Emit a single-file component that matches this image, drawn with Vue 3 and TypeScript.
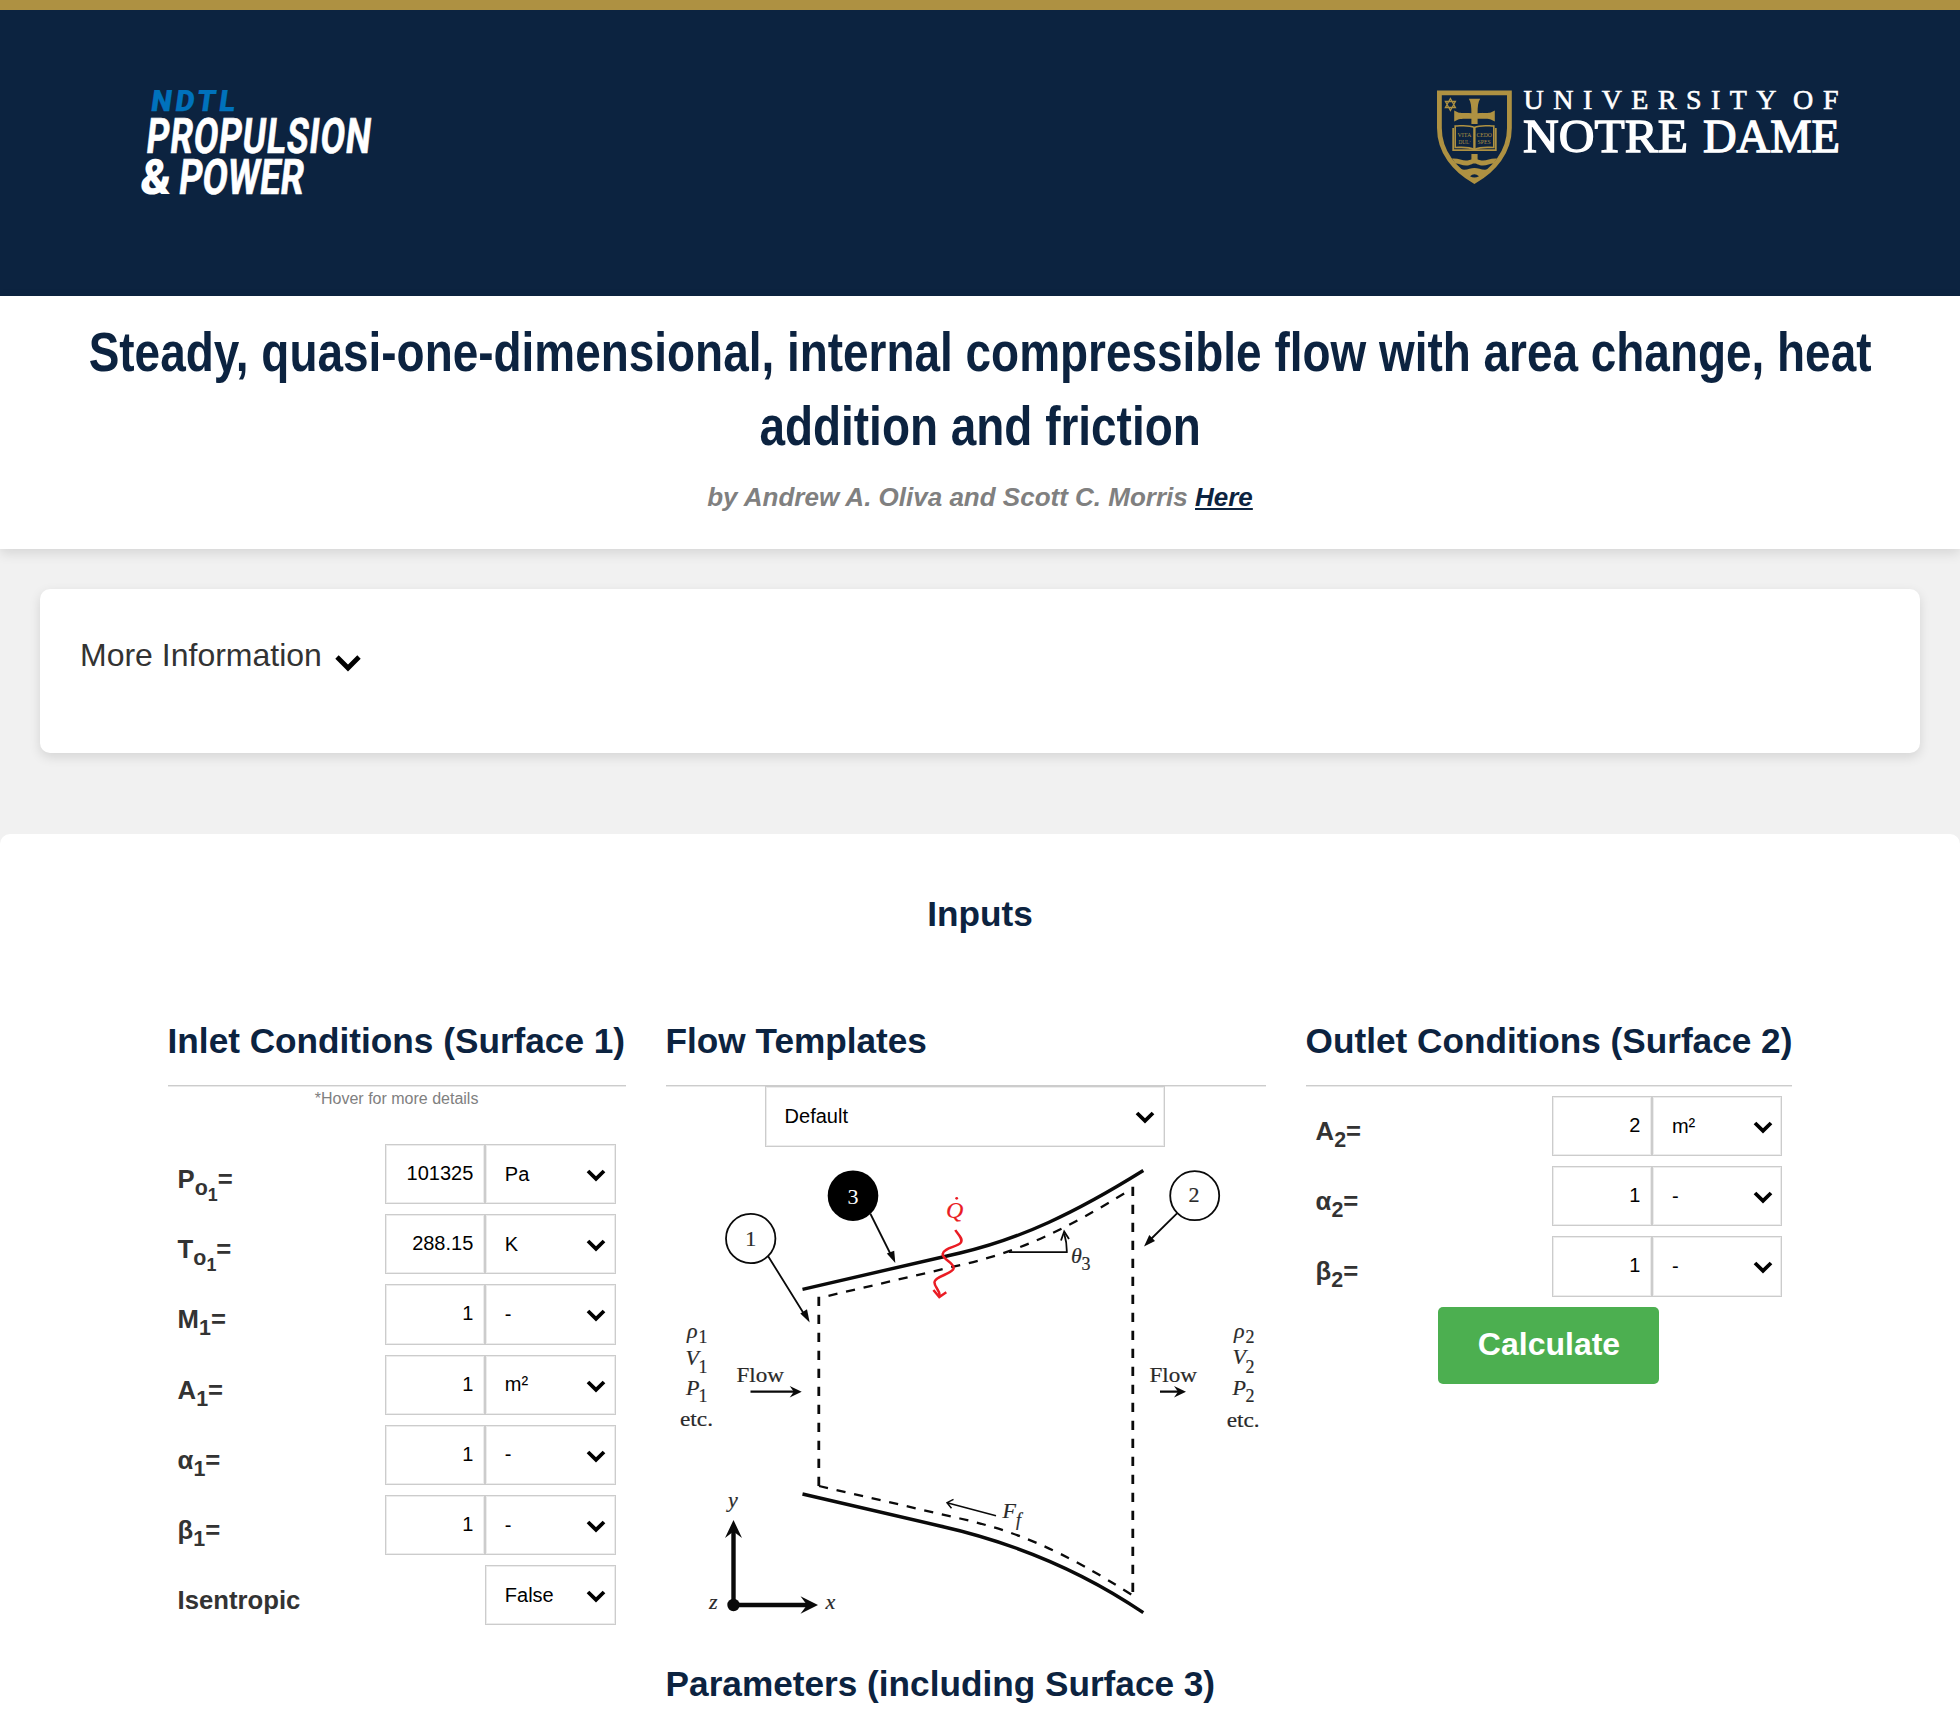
<script setup lang="ts">
import { reactive } from 'vue'

interface Field {
  sym: string
  sub: string
  subsub?: string
  value: string
  unit: string
}

const inlet = reactive<Field[]>([
  { sym: 'P', sub: 'o', subsub: '1', value: '101325', unit: 'Pa' },
  { sym: 'T', sub: 'o', subsub: '1', value: '288.15', unit: 'K' },
  { sym: 'M', sub: '1', value: '1', unit: '-' },
  { sym: 'A', sub: '1', value: '1', unit: 'm²' },
  { sym: 'α', sub: '1', value: '1', unit: '-' },
  { sym: 'β', sub: '1', value: '1', unit: '-' },
])

const outlet = reactive<Field[]>([
  { sym: 'A', sub: '2', value: '2', unit: 'm²' },
  { sym: 'α', sub: '2', value: '1', unit: '-' },
  { sym: 'β', sub: '2', value: '1', unit: '-' },
])
</script>

<template>
  <div class="page">
    <header class="banner">
      <svg class="ndtl" width="240" height="120" viewBox="136 80 240 120">
        <g font-family="Roboto, sans-serif" fill="#fff">
          <text transform="translate(150 111) skewX(-8)" font-size="29.5" font-weight="900" fill="#0072bc" stroke="#0072bc" stroke-width="0.3" textLength="84" lengthAdjust="spacing">NDTL</text>
          <text transform="translate(145 152.7) skewX(-6.5)" font-size="49" font-weight="700" stroke="#fff" stroke-width="0.6" textLength="225" lengthAdjust="spacingAndGlyphs" letter-spacing="1">PROPULSION</text>
          <text transform="translate(139.5 194.3) skewX(-4)" font-size="49" font-weight="900" textLength="31" lengthAdjust="spacingAndGlyphs">&amp;</text>
          <text transform="translate(177.5 194.3) skewX(-6.5)" font-size="49" font-weight="700" stroke="#fff" stroke-width="0.6" textLength="125" lengthAdjust="spacingAndGlyphs">POWER</text>
        </g>
      </svg>
      <svg class="nd" width="410" height="100" viewBox="1434 88 410 100">
        <path d="M1439.4 92.8H1509.4V128C1509.4 152 1494 170 1474.4 181.2C1454.8 170 1439.4 152 1439.4 128Z" fill="none" stroke="#ae9142" stroke-width="4.8" />
        <g fill="#ae9142">
          <path d="M1468.8 98.8H1480.2C1478 102 1477.6 107 1477.6 113.2C1484 113.2 1489 113.2 1490.8 112.6L1494.8 110.4V121.4L1490.8 119.4C1489 118.8 1484 118.8 1477.6 118.8V124H1471.4V118.8C1465 118.8 1460 118.8 1458.2 119.4L1454.2 121.4V110.4L1458.2 112.6C1460 113.2 1465 113.2 1471.4 113.2C1471.4 107 1471 102 1468.8 98.8Z" />
          <path d="M1471.4 154H1477.6V161H1471.4Z" />
          <path d="M1452 158.5C1458 158 1462 160.5 1466 160.5C1470 160.5 1471 159 1474.4 159C1478 159 1479 160.5 1483 160.5C1487 160.5 1491 158 1497 158.5L1493.5 163.5C1490 163.5 1487 165.5 1483 165.5C1478 165.5 1477.5 163.5 1474.4 163.5C1471.5 163.5 1471 165.5 1466 165.5C1462 165.5 1459 163.5 1455.5 163.5Z" />
          <path d="M1460 169C1466 171 1470 168 1474.4 168C1479 168 1483 171 1489 169L1481 177.5L1474.4 182L1467.5 177.5Z" />
        </g>
        <path d="M1470 176.2Q1474.4 172.4 1479 176.2Q1474.4 179 1470 176.2Z" fill="#0c2340" />
        <g fill="none" stroke="#ae9142">
          <path d="M1474.4 127.5C1468 124.5 1461 126 1455.2 126V147.5C1462 147.5 1468 146.5 1474.4 149.5C1481 146.5 1487 147.5 1493.8 147.5V126C1488 126 1481 124.5 1474.4 127.5Z" stroke-width="1.6" />
          <path d="M1453.2 128V150.2H1495.8V128" stroke-width="1.8" />
          <path d="M1474.4 127V150" stroke-width="2.4" />
          <path d="M1450.4 98.5L1455.4 107.5H1445.4ZM1450.4 110.5L1445.4 101.5H1455.4Z" stroke-width="1.3" />
        </g>
        <g font-family="'Liberation Serif', serif" font-size="7" fill="#ae9142">
          <text x="1457.4" y="136.8" textLength="14" lengthAdjust="spacingAndGlyphs">VITA</text>
          <text x="1458.4" y="143.8" textLength="12.5" lengthAdjust="spacingAndGlyphs">DUL·</text>
          <text x="1476.4" y="136.8" textLength="15.5" lengthAdjust="spacingAndGlyphs">CEDO</text>
          <text x="1477.6" y="143.8" textLength="13" lengthAdjust="spacingAndGlyphs">SPES</text>
        </g>
        <g font-family="'Liberation Serif', serif" fill="#fff" stroke="#fff">
          <text x="1523.6" y="109" font-size="28" stroke-width="0.6" textLength="253">UNIVERSITY</text>
          <text x="1793" y="109" font-size="28" stroke-width="0.6" textLength="45.5">OF</text>
          <text x="1523" y="151.7" font-size="47" stroke-width="1.3" textLength="165" lengthAdjust="spacingAndGlyphs">NOTRE</text>
          <text x="1703" y="151.7" font-size="47" stroke-width="1.3" textLength="137" lengthAdjust="spacingAndGlyphs">DAME</text>
        </g>
      </svg>
    </header>

    <section class="title">
      <h1>
        <span>Steady, quasi-one-dimensional, internal compressible flow with area change, heat</span>
        <span>addition and friction</span>
      </h1>
      <p class="authors">by Andrew A. Oliva and Scott C. Morris <a href="#">Here</a></p>
    </section>

    <section class="info">
      <span>More Information</span>
      <svg width="26" height="17" viewBox="0 0 26 17"><path d="M2 2L13 13L24 2" fill="none" stroke="#000" stroke-width="4.8" /></svg>
    </section>

    <main class="inputs">
      <h2>Inputs</h2>
      <div class="columns">
        <section class="inlet">
          <h3>Inlet Conditions (Surface 1)</h3>
          <p class="hint">*Hover for more details</p>
          <div v-for="f in inlet" :key="f.sym" class="row">
            <label>{{ f.sym }}<sub>{{ f.sub }}<sub v-if="f.subsub">{{ f.subsub }}</sub></sub>=</label>
            <input v-model="f.value" type="text" />
            <div class="pick">
              <select><option>{{ f.unit }}</option></select>
              <svg width="20" height="13" viewBox="0 0 20 13"><path d="M2 2L10 9.8L18 2" /></svg>
            </div>
          </div>
          <div class="row">
            <label>Isentropic</label>
            <div class="pick">
              <select><option>False</option></select>
              <svg width="20" height="13" viewBox="0 0 20 13"><path d="M2 2L10 9.8L18 2" /></svg>
            </div>
          </div>
        </section>

        <section class="flow">
          <h3>Flow Templates</h3>
          <div class="pick template">
            <select><option>Default</option></select>
            <svg width="20" height="13" viewBox="0 0 20 13"><path d="M2 2L10 9.8L18 2" /></svg>
          </div>
          <svg class="diagram" width="600" height="500" viewBox="666 1147 600 500">
            <g fill="none" stroke="#0a0a0a">
              <path d="M802.5 1289.3L960 1253C1020 1239 1075 1213 1143.3 1170.5" stroke-width="3.4" />
              <path d="M802.5 1494L940 1526C1000 1539.5 1070 1563 1143.3 1612.7" stroke-width="3.4" />
              <g stroke-width="2.8" stroke-dasharray="9.2 8.8">
                <path d="M818.8 1296.7V1486" />
                <path d="M1132.8 1186.7V1592" />
                <path d="M828.5 1295.8L965 1264C1020 1251 1065 1230 1129 1190.5" stroke-width="2.3" />
                <path d="M819 1486L960 1518.5C1015 1531 1060 1549 1132 1595" stroke-width="2.3" />
              </g>
              <g stroke-width="1.8">
                <circle cx="750.7" cy="1238.5" r="24.7" />
                <circle cx="1194.7" cy="1195.7" r="24.5" />
                <path d="M768 1256L805 1315.5M870.5 1214L891.5 1256M1177 1213.3L1150 1240" />
                <path d="M1009 1252.2H1066.8Q1067 1243 1064.3 1234" />
                <path d="M1061 1240.5L1064.2 1231.5L1069 1239" />
                <path d="M996 1515.7L948 1503M953.5 1499.3L947 1502.7L951.5 1508.3" stroke-width="1.5" />
              </g>
              <path d="M750.5 1391.7H796M1160 1391.7H1181" stroke-width="2.2" />
              <path d="M733.5 1529V1605H808" stroke-width="4.4" />
            </g>
            <g fill="#0a0a0a">
              <circle cx="853" cy="1195.7" r="25.3" fill="#000" />
              <path d="M809.7 1322.6L800.3 1313.6L807 1309.3Z" />
              <path d="M895.3 1263L886.8 1253.6L894.2 1250.7Z" />
              <path d="M1144 1246.5L1149.3 1235L1155 1241Z" />
              <path d="M801.7 1391.7L789.7 1386L793.8 1391.7L789.7 1397.4Z" />
              <path d="M1186 1391.7L1174 1386L1178 1391.7L1174 1397.4Z" />
              <path d="M733.5 1520L725 1538L733.5 1531.5L742 1538Z" />
              <path d="M818 1605L800.5 1596.3L807 1605L800.5 1613.7Z" />
              <circle cx="733.5" cy="1605" r="6.2" />
            </g>
            <g fill="none" stroke="#ea1c24" stroke-width="2.5">
              <path d="M955.3 1230C957.5 1234 964 1239 960.5 1243C957 1247 943.5 1248 942.7 1254C942 1259 954 1263 953.7 1268C953 1274 935 1276 934.5 1282C934 1287 940.5 1290 939.6 1296.5" />
              <path d="M933.4 1290L939.3 1297L946.3 1292.3" />
            </g>
            <circle cx="956.7" cy="1198.3" r="1.4" fill="#ea1c24" />
            <g class="math">
              <text x="745.2" y="1246">1</text>
              <text x="847.5" y="1203.5" class="inv">3</text>
              <text x="1188.5" y="1202">2</text>
              <text x="946" y="1217.5" font-size="24" font-style="italic" class="heat">Q</text>
              <text x="1071" y="1262.5" font-style="italic">θ</text>
              <text x="1081.5" y="1269.5" class="s">3</text>
              <text x="736.5" y="1382" textLength="47.5" lengthAdjust="spacingAndGlyphs">Flow</text>
              <text x="1149.5" y="1382" textLength="47.5" lengthAdjust="spacingAndGlyphs">Flow</text>
              <text x="687" y="1338" font-style="italic">ρ</text>
              <text x="698.5" y="1343" class="s">1</text>
              <text x="685.5" y="1364.5" font-style="italic">V</text>
              <text x="698.5" y="1373" class="s">1</text>
              <text x="686" y="1395" font-style="italic">P</text>
              <text x="698.5" y="1402" class="s">1</text>
              <text x="680" y="1426" textLength="33" lengthAdjust="spacingAndGlyphs">etc.</text>
              <text x="1234" y="1338" font-style="italic">ρ</text>
              <text x="1245.5" y="1343.3" class="s">2</text>
              <text x="1232.5" y="1364.3" font-style="italic">V</text>
              <text x="1245.5" y="1373.3" class="s">2</text>
              <text x="1232.5" y="1395.3" font-style="italic">P</text>
              <text x="1245.5" y="1402" class="s">2</text>
              <text x="1226.7" y="1426.5" textLength="33" lengthAdjust="spacingAndGlyphs">etc.</text>
              <text x="728" y="1507" font-style="italic">y</text>
              <text x="709" y="1609.3" font-style="italic">z</text>
              <text x="825.5" y="1609.3" font-style="italic">x</text>
              <text x="1002.5" y="1518.3" font-style="italic">F</text>
              <text x="1016" y="1525.5" font-style="italic" class="s">f</text>
            </g>
          </svg>
          <h3 class="params">Parameters (including Surface 3)</h3>
        </section>

        <section class="outlet">
          <h3>Outlet Conditions (Surface 2)</h3>
          <div v-for="f in outlet" :key="f.sym" class="row">
            <label>{{ f.sym }}<sub>{{ f.sub }}</sub>=</label>
            <input v-model="f.value" type="text" />
            <div class="pick">
              <select><option>{{ f.unit }}</option></select>
              <svg width="20" height="13" viewBox="0 0 20 13"><path d="M2 2L10 9.8L18 2" /></svg>
            </div>
          </div>
          <button type="button">Calculate</button>
        </section>
      </div>
    </main>
  </div>
</template>

<style>
body {
  margin: 0;
  background: #f1f1f1;
}
</style>

<style scoped>
.page {
  width: 1960px;
  height: 1722px;
  overflow: hidden;
  background: #f1f1f1;
  color: #333;
  font-family: 'Liberation Sans', Arial, sans-serif;
}
.page * {
  box-sizing: border-box;
}
.banner {
  display: flex;
  justify-content: space-between;
  height: 296px;
  padding: 0 116px 0 136px;
  border-top: 10px solid #ae9142;
  background: #0c2340;
}
.banner svg {
  overflow: visible;
}
.ndtl {
  margin-top: 70px;
}
.nd {
  margin-top: 78px;
}
.title {
  height: 253px;
  padding-top: 19px;
  background: #fff;
  box-shadow: 0 4px 12px rgba(0, 0, 0, 0.12);
}
h1 {
  display: flex;
  flex-direction: column;
  align-items: center;
  margin: 0;
  color: #0c2340;
  font-size: 56px;
  font-weight: 700;
  line-height: 74px;
  white-space: nowrap;
}
h1 span {
  transform: scaleX(0.82);
}
.authors {
  margin: 19px 0 0;
  color: #808080;
  font-size: 26px;
  font-style: italic;
  font-weight: 700;
  line-height: 30px;
  text-align: center;
}
.authors a {
  color: #0c2340;
}
.info {
  display: flex;
  height: 164px;
  margin: 40px 40px 81px;
  padding: 47px 40px;
  border-radius: 10px;
  background: #fff;
  box-shadow: 0 4px 12px rgba(0, 0, 0, 0.12);
  font-size: 32px;
  line-height: 38px;
}
.info svg {
  margin: 19px 0 0 13px;
}
.inputs {
  height: 900px;
  padding-top: 60px;
  border-radius: 10px;
  background: #fff;
}
h2,
h3 {
  margin: 0;
  color: #0c2340;
  font-size: 35.2px;
  font-weight: 700;
  line-height: 40px;
}
h2 {
  text-align: center;
}
.columns {
  display: flex;
  justify-content: center;
  gap: 40px;
  margin-top: 86px;
}
h3 {
  height: 66px;
  padding-top: 1px;
  border-bottom: 1px solid #ccc;
  box-shadow: 0 1px 0 #e9e9e9;
  white-space: nowrap;
}
.inlet {
  width: 458px;
}
.flow {
  width: 600px;
}
.hint {
  margin: 3px 0 36px;
  color: #808080;
  font-size: 16px;
  line-height: 19px;
  text-align: center;
}
.row {
  display: flex;
  height: 60.2px;
  margin-bottom: 10px;
  padding: 0 10px;
}
.inlet .row {
  padding-right: 9.8px;
}
.inlet .pick {
  width: 131px;
}
.outlet .row:nth-of-type(1) {
  margin-top: 10px;
}
label {
  flex: 1;
  padding-top: 20px;
  font-size: 25.7px;
  font-weight: 700;
  line-height: 30px;
}
sub {
  line-height: 0;
  vertical-align: -7px;
}
sub sub {
  vertical-align: -6.4px;
}
input,
select {
  height: 100%;
  margin: 0;
  border: 1px solid #ccc;
  border-radius: 0;
  outline: none;
  appearance: none;
  background: #fff;
  box-shadow: inset 0 0 0 1px #ececec;
  color: #000;
  font-family: inherit;
  font-size: 20px;
}
input {
  width: 100px;
  padding: 0 10.5px 1px 0;
  text-align: right;
}
select {
  width: 100%;
  padding: 0 20px 1px 19px;
}
.pick {
  position: relative;
  width: 130.5px;
  height: 100%;
}
.pick svg {
  position: absolute;
  top: 25px;
  right: 9.5px;
  fill: none;
  stroke: #000;
  stroke-width: 3.8;
}
.flow .template {
  width: 400px;
  height: 61px;
  margin: 0 0 0 99px;
}
.template select {
  padding-bottom: 2px;
}
.diagram {
  display: block;
}
.flow .params {
  height: 60px;
  margin-top: 16px;
  border: 0;
  box-shadow: none;
}
.math {
  fill: #2a2a2a;
  stroke: #2a2a2a;
  stroke-width: 0.2px;
  font-family: 'Liberation Serif', serif;
  font-size: 22px;
}
.math .s {
  font-size: 18px;
}
.math .inv {
  fill: #fff;
  stroke: none;
}
.math .heat {
  fill: #ea1c24;
  stroke: #ea1c24;
}
button {
  display: block;
  width: 221px;
  height: 77px;
  margin: 0 auto;
  padding: 0 0 2px;
  border: 0;
  border-radius: 5px;
  background: #4caf50;
  color: #fff;
  font-family: inherit;
  font-size: 32px;
  font-weight: 700;
}
</style>
